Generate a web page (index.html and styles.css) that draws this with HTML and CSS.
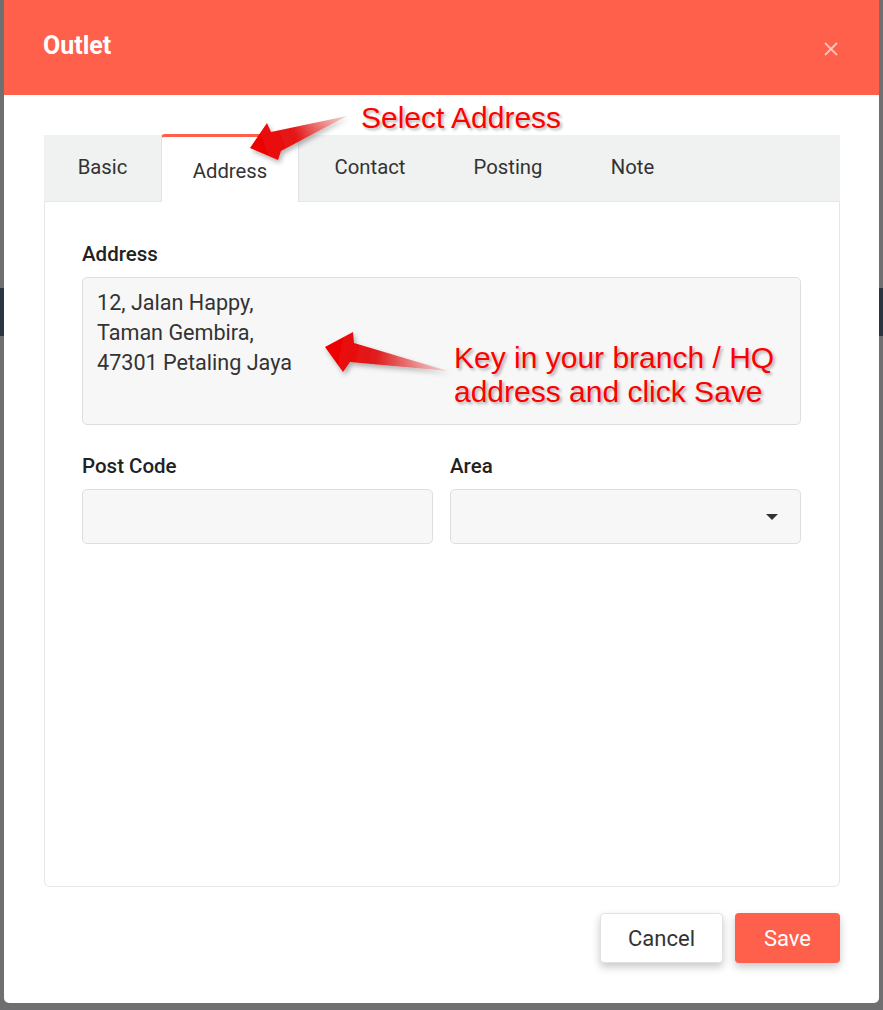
FILE: index.html
```html
<!DOCTYPE html>
<html>
<head>
<meta charset="utf-8">
<link rel="stylesheet" href="styles.css">
</head>
<body>
<div class="modal">
  <div class="modal-header">
    <h1 class="modal-title">Outlet</h1>
    <svg class="close" width="14" height="14" viewBox="0 0 14 14"><path d="M1 1L13 13M13 1L1 13" stroke="currentColor" stroke-width="1.8" fill="none"/></svg>
  </div>
  <div class="modal-body">
    <div class="tabs">
      <div class="tab">Basic</div>
      <div class="tab active">Address</div>
      <div class="tab">Contact</div>
      <div class="tab">Posting</div>
      <div class="tab">Note</div>
    </div>
    <div class="panel">
      <div class="field">
        <label class="label">Address</label>
        <div class="textarea">12, Jalan Happy,<br>Taman Gembira,<br>47301 Petaling Jaya</div>
      </div>
      <div class="row">
        <div class="field">
          <label class="label">Post Code</label>
          <div class="input"></div>
        </div>
        <div class="field">
          <label class="label">Area</label>
          <div class="input select"><span class="caret"></span></div>
        </div>
      </div>
    </div>
  </div>
  <div class="modal-footer">
    <button class="btn btn-cancel">Cancel</button>
    <button class="btn btn-save">Save</button>
  </div>
</div>

<svg class="annot-arrows" width="883" height="1010" viewBox="0 0 883 1010">
  <defs>
    <linearGradient id="g1" gradientUnits="userSpaceOnUse" x1="255" y1="150" x2="347" y2="117">
      <stop offset="0" stop-color="#ee0000"/>
      <stop offset="0.45" stop-color="#e51a1a"/>
      <stop offset="1" stop-color="#f2a0a0" stop-opacity="0.5"/>
    </linearGradient>
    <linearGradient id="g2" gradientUnits="userSpaceOnUse" x1="330" y1="350" x2="448" y2="371">
      <stop offset="0" stop-color="#ee0000"/>
      <stop offset="0.4" stop-color="#e01e1e"/>
      <stop offset="1" stop-color="#f2a8a8" stop-opacity="0.5"/>
    </linearGradient>
    <filter id="sh" x="-20%" y="-40%" width="140%" height="180%">
      <feDropShadow dx="2" dy="3" stdDeviation="2.5" flood-color="#000" flood-opacity="0.3"/>
    </filter>
  </defs>
  <polygon points="250,148 267,123 271,132 347,116 281,151 278,160" fill="url(#g1)" filter="url(#sh)"/>
  <polygon points="325,347 353,332 354,343 448,371 350,362 343,372" fill="url(#g2)" filter="url(#sh)"/>
</svg>
<div class="annot annot-1">Select Address</div>
<div class="annot annot-2">Key in your branch / HQ<br>address and click Save</div>
</body>
</html>
```
FILE: styles.css
```css
* { box-sizing: border-box; }

html, body { margin: 0; padding: 0; }

body {
  width: 883px;
  height: 1010px;
  overflow: hidden;
  background-color: #6f6f71;
  background-image: linear-gradient(to bottom, transparent 288px, #2b3441 288px, #2b3441 336px, transparent 336px);
  font-family: Roboto, "Noto Sans", sans-serif;
  position: relative;
}

.modal {
  margin-left: 4px;
  width: 875px;
  height: 1003px;
  background: #fff;
  border-radius: 0 0 5px 5px;
  display: flex;
  flex-direction: column;
}

.modal-header {
  height: 95px;
  background: #ff604c;
  display: flex;
  align-items: center;
  justify-content: space-between;
  padding: 0 41px 0 39px;
}

.modal-title {
  margin: 0;
  color: #fff;
  font-size: 25px;
  font-weight: 700;
  padding-bottom: 4px;
}

.close {
  color: rgba(255, 255, 255, 0.62);
  margin-top: 2px;
}

.modal-body {
  padding: 39px 39px 0 40px;
  flex: 1;
  display: flex;
  flex-direction: column;
}

.tabs {
  display: flex;
  height: 67px;
  background: #f0f1f1;
  margin-top: 1px;
}

.tab {
  display: flex;
  align-items: center;
  justify-content: center;
  font-size: 20.3px;
  color: #333;
  height: 66px;
  padding-bottom: 2px;
}

.tab:nth-child(1) { width: 117px; }
.tab:nth-child(2) { width: 138px; }
.tab:nth-child(3) { width: 142px; }
.tab:nth-child(4) { width: 134px; }
.tab:nth-child(5) { width: 115px; }

.tab.active {
  background: #fff;
  border-top: 3px solid #ff604c;
  border-left: 1px solid #e3e3e3;
  border-right: 1px solid #e3e3e3;
  border-radius: 4px 4px 0 0;
  margin-top: -1px;
  height: 68px;
  padding-top: 3px;
  padding-bottom: 0;
  position: relative;
  z-index: 1;
}

.panel {
  height: 686px;
  border: 1px solid #e6e6e6;
  border-radius: 0 0 6px 6px;
  margin-top: -1px;
  padding: 40px 38px 0 37px;
  display: flex;
  flex-direction: column;
  gap: 29px;
}

.field {
  display: flex;
  flex-direction: column;
  gap: 11px;
  flex: 1;
}

.panel > .field { flex: none; }

.label {
  font-size: 20.5px;
  font-weight: 500;
  color: #222;
  line-height: 24px;
}

.textarea {
  height: 148px;
  background: #f7f7f7;
  border: 1px solid #dedede;
  border-radius: 5px;
  padding: 10px 14px;
  font-size: 21.6px;
  line-height: 30px;
  color: #333;
}

.row {
  display: flex;
  gap: 17px;
}

.input {
  height: 55px;
  background: #f7f7f7;
  border: 1px solid #dedede;
  border-radius: 5px;
}

.select {
  display: flex;
  align-items: center;
  justify-content: flex-end;
  padding-right: 22px;
}

.caret {
  width: 0;
  height: 0;
  border-left: 6px solid transparent;
  border-right: 6px solid transparent;
  border-top: 6px solid #333;
}

.modal-footer {
  display: flex;
  justify-content: flex-end;
  gap: 12px;
  padding: 26px 39px 40px 0;
}

.btn {
  height: 50px;
  border: none;
  border-radius: 4px;
  font-family: Roboto, "Noto Sans", sans-serif;
  font-size: 22px;
}

.btn-cancel {
  width: 123px;
  background: #fff;
  color: #333;
  border: 1px solid #e2e2e2;
  box-shadow: 0 4px 8px rgba(0, 0, 0, 0.22);
}

.btn-save {
  width: 105px;
  background: #ff604c;
  color: #fff;
  box-shadow: 0 4px 8px rgba(0, 0, 0, 0.22);
}

.annot-arrows {
  position: absolute;
  left: 0;
  top: 0;
  z-index: 5;
  pointer-events: none;
}

.annot {
  position: absolute;
  z-index: 6;
  font-family: "Liberation Sans", Arial, sans-serif;
  color: #ff0000;
  text-shadow: 2px 2px 3px rgba(0, 0, 0, 0.3);
  white-space: nowrap;
}

.annot-1 {
  left: 361px;
  top: 100px;
  font-size: 30px;
  line-height: 36px;
}

.annot-2 {
  left: 454px;
  top: 341px;
  font-size: 30px;
  line-height: 34px;
}
```
